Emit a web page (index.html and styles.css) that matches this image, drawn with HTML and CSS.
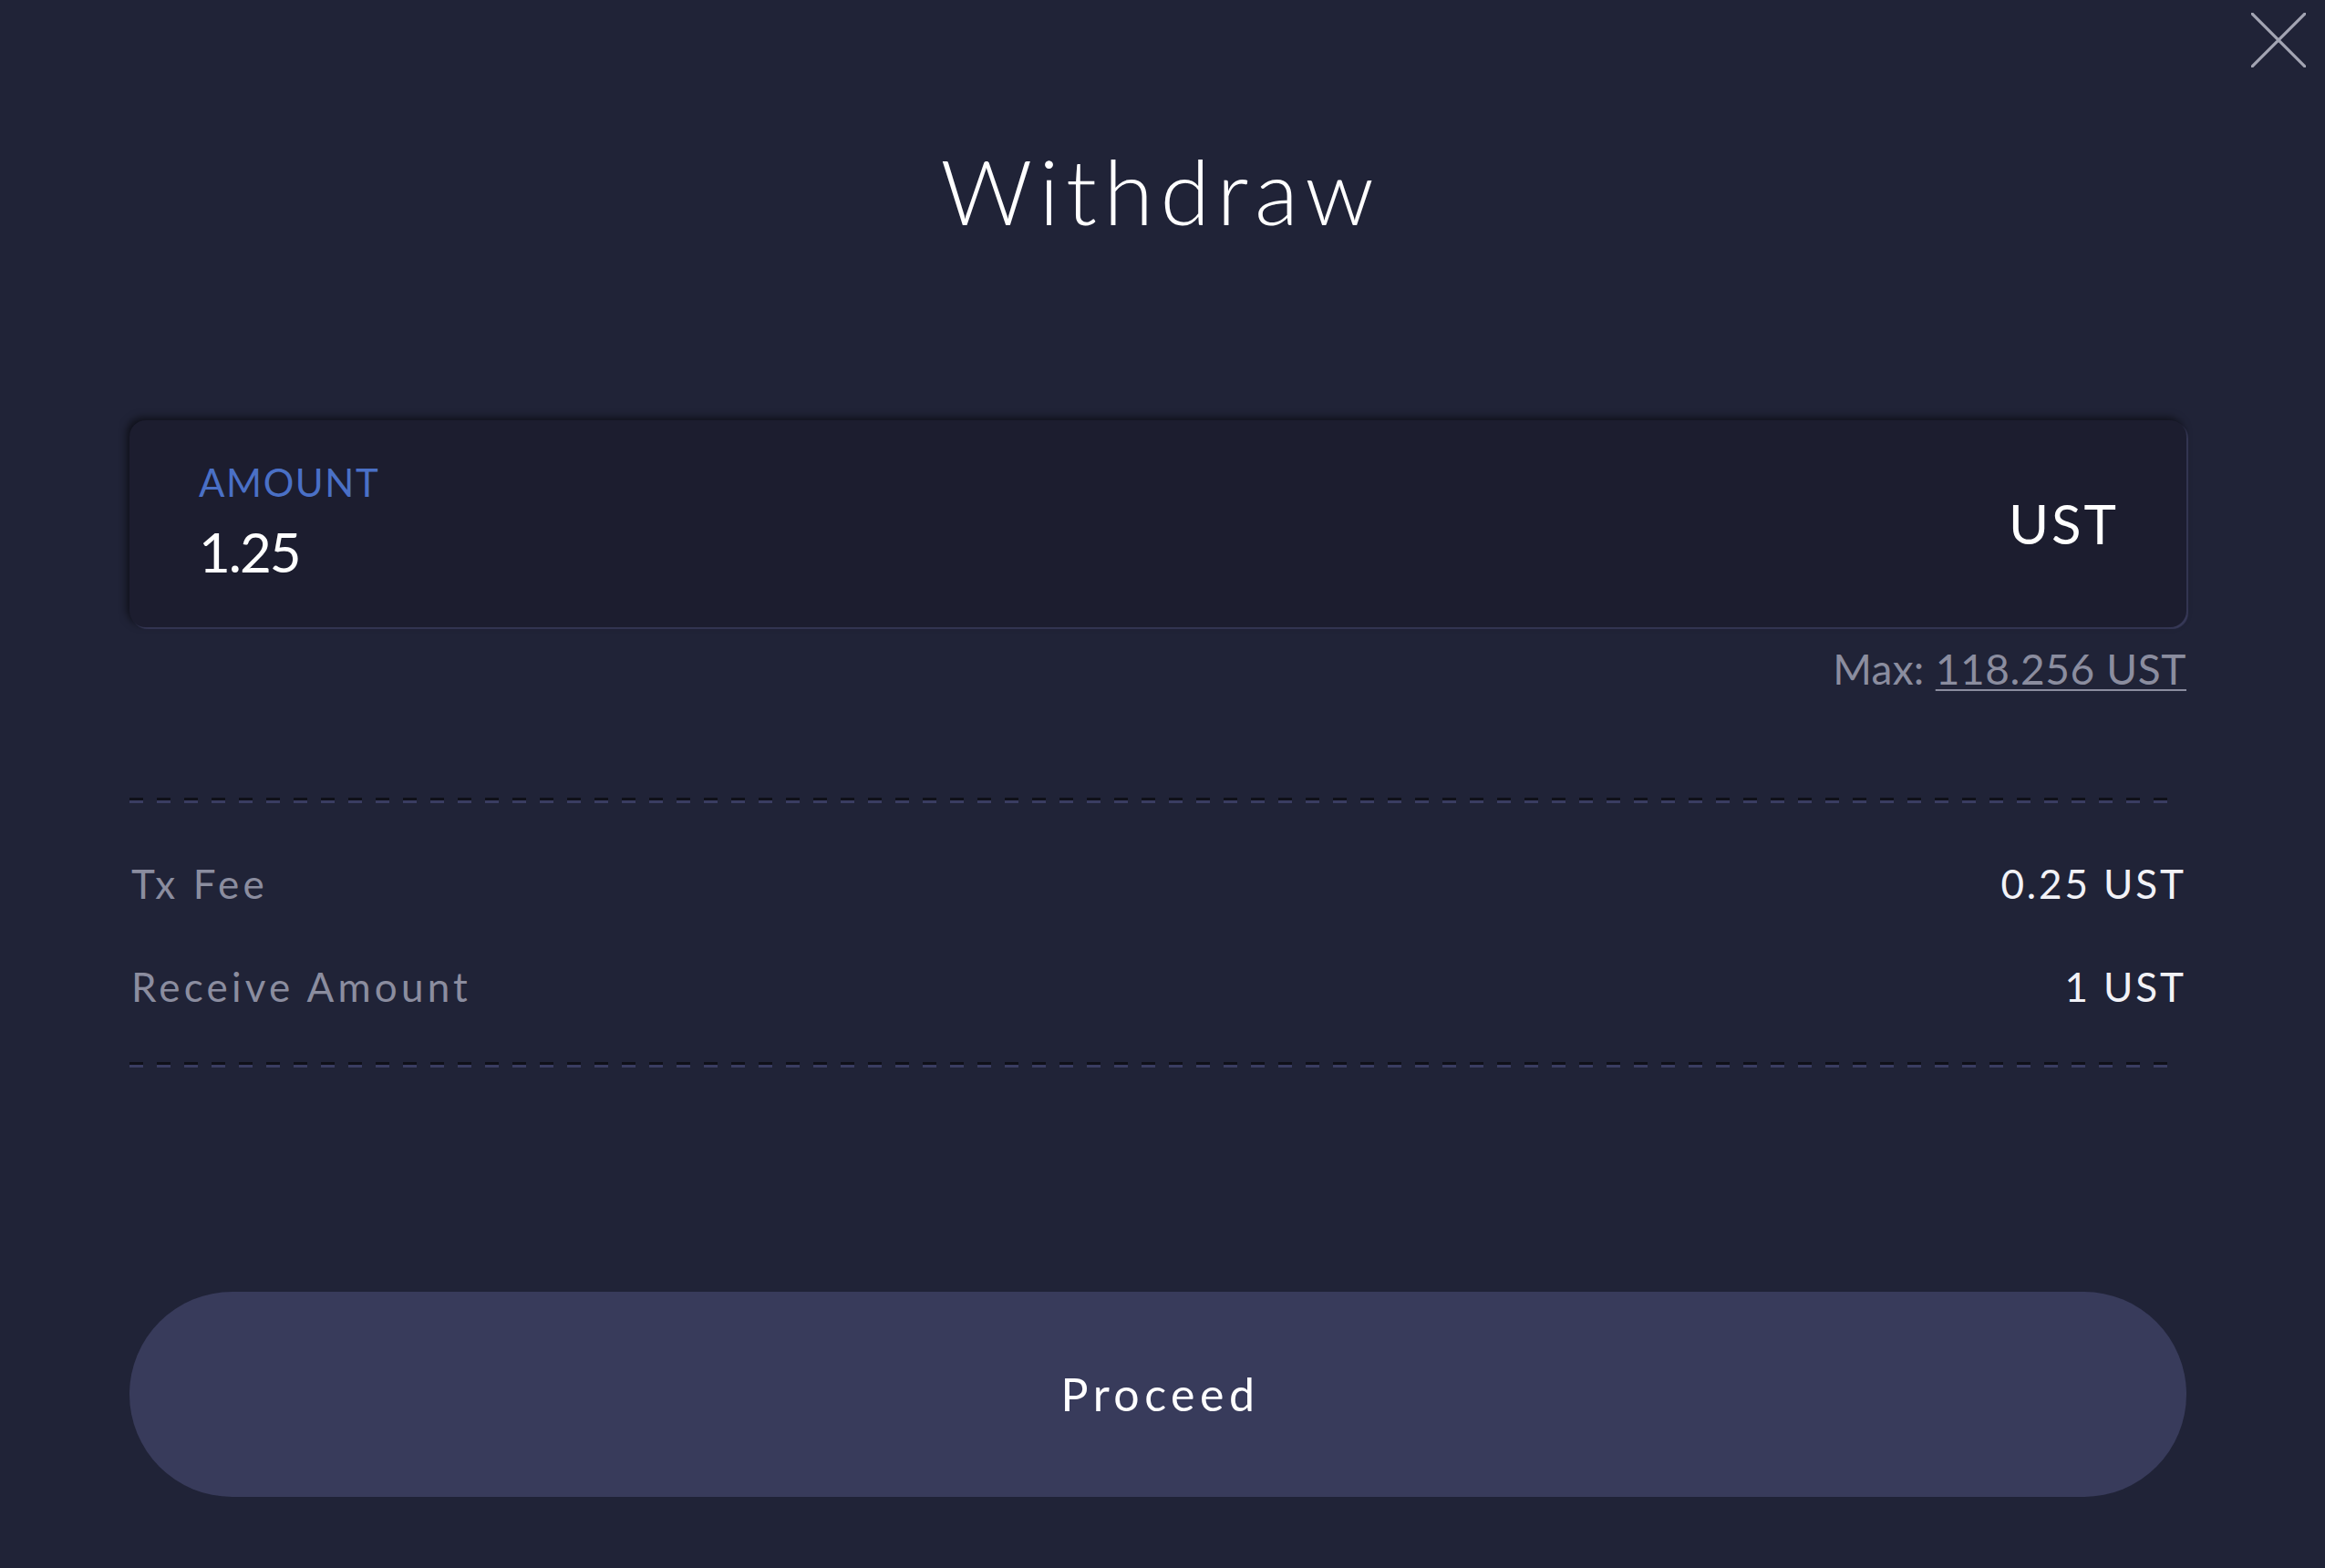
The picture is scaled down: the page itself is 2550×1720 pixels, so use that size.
FILE: index.html
```html
<!DOCTYPE html>
<html lang="en">
<head>
<meta charset="utf-8">
<title>Withdraw</title>
<link rel="stylesheet" href="styles.css">
</head>
<body>
<div class="modal">
  <button class="close" aria-label="Close">
    <svg viewBox="0 0 60 60" width="60" height="60"><path d="M1 1 L59 59 M59 1 L1 59" stroke="#a3a5b3" stroke-width="3.2" stroke-linecap="round" fill="none"/></svg>
  </button>
  <h1 class="title">Withdraw</h1>
  <div class="amount-box">
    <div class="amount-left">
      <div class="amount-label">AMOUNT</div>
      <div class="amount-value">1.25</div>
    </div>
    <div class="amount-unit">UST</div>
  </div>
  <div class="max-row">Max: <span class="max-link">118.256 UST</span></div>
  <div class="divider divider-top"></div>
  <div class="rows">
    <div class="row"><span class="row-label">Tx Fee</span><span class="row-value">0.25 UST</span></div>
    <div class="row"><span class="row-label">Receive Amount</span><span class="row-value">1 UST</span></div>
  </div>
  <div class="divider divider-bottom"></div>
  <button class="proceed">Proceed</button>
</div>
</body>
</html>
```
FILE: styles.css
```css
html, body {
  margin: 0;
  padding: 0;
  background: #202337;
}
body {
  font-family: Lato, "Open Sans", sans-serif;
  width: 2550px;
  height: 1720px;
  overflow: hidden;
}
.modal {
  position: relative;
  display: flex;
  flex-direction: column;
  padding: 0 152px 0 142px;
  height: 1720px;
  box-sizing: border-box;
}
.close {
  position: absolute;
  top: 14px;
  right: 21px;
  width: 60px;
  height: 60px;
  padding: 0;
  border: 0;
  background: none;
  display: flex;
}
.title {
  margin: 149px 0 0;
  font-size: 99px;
  line-height: 120px;
  font-weight: 300;
  letter-spacing: 7.5px;
  color: #ffffff;
  text-align: center;
  padding-left: 6px;
}
.amount-box {
  margin-top: 192px;
  height: 227px;
  box-sizing: border-box;
  background: #1c1d2f;
  border-radius: 18px;
  box-shadow: -3px -3px 8px rgba(0, 0, 0, 0.55), 2px 2px 1px #3a3c5c;
  display: flex;
  align-items: center;
  justify-content: space-between;
  padding: 0 74px 4px 76px;
}
.amount-left {
  display: flex;
  flex-direction: column;
  gap: 15px;
}
.amount-label {
  font-size: 42px;
  line-height: 50px;
  color: #4a70c6;
  letter-spacing: 1.6px;
}
.amount-value {
  font-size: 60px;
  line-height: 72px;
  color: #ffffff;
  letter-spacing: -2px;
}
.amount-unit {
  font-size: 60px;
  line-height: 72px;
  color: #ffffff;
  letter-spacing: 3px;
  padding-top: 2px;
}
.max-row {
  margin-top: 18px;
  text-align: right;
  font-size: 46px;
  line-height: 55px;
  color: #8b8d9f;
  letter-spacing: 0.3px;
}
.max-link {
  text-decoration: underline;
  text-decoration-thickness: 2px;
  text-underline-offset: 5px;
  letter-spacing: 0.6px;
}
.divider {
  height: 6px;
  background-image:
    repeating-linear-gradient(90deg, #0f1019 0 15px, transparent 15px 30px),
    repeating-linear-gradient(90deg, #3a3d61 0 15px, transparent 15px 30px);
  background-size: 100% 3px, 100% 3px;
  background-position: 0 0, 0 3px;
  background-repeat: no-repeat;
  margin-right: 15px;
}
.divider-top {
  margin-top: 114px;
}
.rows {
  display: flex;
  flex-direction: column;
  gap: 60px;
  padding: 62px 0 56px;
}
.row {
  display: flex;
  justify-content: space-between;
  font-size: 44px;
  line-height: 53px;
}
.row-label {
  color: #8b8d9f;
  padding-left: 2px;
  letter-spacing: 4.2px;
}
.row-value {
  color: #f2f2f7;
  letter-spacing: 2.9px;
}
.proceed {
  margin-top: 246px;
  height: 225px;
  border: 0;
  border-radius: 113px;
  background: #383b5b;
  color: #ffffff;
  font-family: Lato, "Open Sans", sans-serif;
  font-size: 50px;
  letter-spacing: 5.5px;
  display: flex;
  align-items: center;
  justify-content: center;
  padding: 0 0 2px 5px;
}
```
